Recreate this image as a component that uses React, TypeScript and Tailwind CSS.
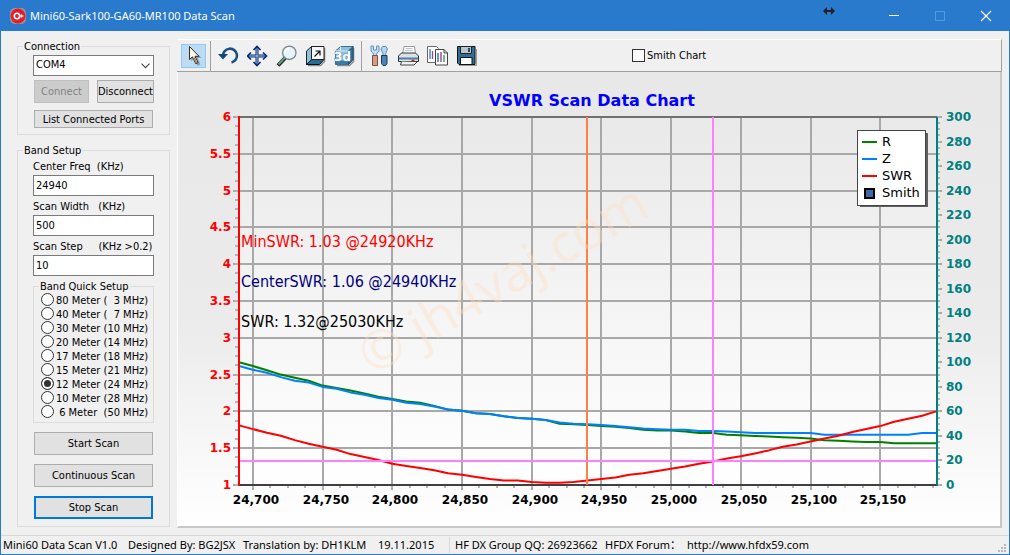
import type { ReactNode } from "react";

const uiFont = "font-['DejaVu_Sans_Condensed','Noto_Sans',sans-serif]";
const segoeFont = "font-['Noto_Sans','Noto_Sans_CJK_SC',sans-serif]";

const bands = [
  "80 Meter (  3 MHz)",
  "40 Meter (  7 MHz)",
  "30 Meter (10 MHz)",
  "20 Meter (14 MHz)",
  "17 Meter (18 MHz)",
  "15 Meter (21 MHz)",
  "12 Meter (24 MHz)",
  "10 Meter (28 MHz)",
  " 6 Meter  (50 MHz)",
];

// one sample every 10 KHz, 24690..25190
const START = 24690;
const STEP = 10;

const swr = [
  1.81, 1.76, 1.71, 1.67, 1.61, 1.56, 1.52, 1.48, 1.42, 1.38, 1.34, 1.29, 1.26, 1.23, 1.2, 1.16, 1.14,
  1.11, 1.08, 1.06, 1.06, 1.04, 1.03, 1.03, 1.04, 1.06, 1.08, 1.1, 1.14, 1.16, 1.19, 1.22, 1.25, 1.29,
  1.32, 1.36, 1.39, 1.43, 1.47, 1.52, 1.55, 1.59, 1.63, 1.67, 1.72, 1.76, 1.8, 1.86, 1.9, 1.94, 2,
];

const impedance = [
  97, 94, 91.5, 88, 85, 83.5, 80, 78.5, 75.5, 73.5, 71, 69.5, 67, 66, 64, 61.5, 60.5, 58.5, 58, 56, 54.5,
  54, 53, 51, 50, 49.5, 49, 48, 47, 46, 45.5, 45, 45, 44, 44, 43.5, 43, 42.5, 42.5, 42.5, 42.5, 42.5, 41,
  41, 41, 41, 41, 41, 41, 42.5, 42.5,
];

const resistance = [
  100, 97, 93.5, 90, 87.5, 85, 81, 79, 77, 74.5, 72, 70, 68, 67, 64.5, 61.5, 60.5, 58.5, 58, 56, 54.5, 54,
  53, 50, 49.5, 49, 48, 47.5, 46.5, 45, 44.5, 44.5, 43.5, 42.5, 42.5, 41, 40.5, 40, 39.5, 39, 38.5, 38,
  36.5, 36, 35.5, 35, 35, 34, 34, 34, 34,
];

const plot = { left: 61, right: 759, top: 45, bottom: 413 };

const xOf = (freq: number) => plot.left + (freq - START) * 1.394;
const ySwr = (value: number) => plot.bottom - ((value - 1) / 5) * (plot.bottom - plot.top);
const yOhm = (value: number) => plot.bottom - (value / 300) * (plot.bottom - plot.top);

function toPoints(values: number[], y: (value: number) => number) {
  return values.map((value, i) => `${xOf(START + i * STEP).toFixed(1)},${y(value).toFixed(1)}`).join(" ");
}

const range = (from: number, to: number, step: number) =>
  Array.from({ length: Math.round((to - from) / step) + 1 }, (_, i) => from + i * step);

function GroupBox({
  title,
  className = "",
  legendClass = "",
  children,
}: {
  title: string;
  className?: string;
  legendClass?: string;
  children: ReactNode;
}) {
  return (
    <fieldset className={`min-w-0 border border-[#dcdcdc] ${className}`}>
      <legend className={`h-3.5 px-px leading-4 ${legendClass}`}>{title}</legend>
      {children}
    </fieldset>
  );
}

function Field({ id, label, value }: { id: string; label: string; value: string }) {
  return (
    <div className="flex flex-col">
      <label htmlFor={id} className="whitespace-pre leading-4">
        {label}
      </label>
      <input id={id} defaultValue={value} className="h-[21px] w-full border border-[#7a7a7a] bg-white px-0.5" />
    </div>
  );
}

function PushButton({ children, className = "" }: { children: ReactNode; className?: string }) {
  return (
    <button type="button" className={`flex items-center justify-center whitespace-nowrap bg-[#e1e1e1] pt-0.5 ${className}`}>
      {children}
    </button>
  );
}

function ToolButton({ label, active, children }: { label: string; active?: boolean; children: ReactNode }) {
  return (
    <button
      type="button"
      aria-label={label}
      className={`flex h-6 w-[25px] shrink-0 items-center justify-center border ${
        active ? "border-[#90c8f6] bg-[#bcdcf4]" : "border-transparent"
      }`}
    >
      <svg viewBox="0 0 22 22" className="h-[22px] w-[22px] shrink-0" fill="none">
        {children}
      </svg>
    </button>
  );
}

function Separator() {
  return <div className="mr-px h-[30px] w-px shrink-0 bg-[#a0a0a0]" />;
}

function TitleBar() {
  return (
    <header className="relative flex h-[31px] items-center bg-[#2979cc] text-white">
      <svg viewBox="0 0 16 16" className="ml-[9px] h-4 w-4 shrink-0">
        <rect width="16" height="16" rx="5" fill="#a98f94" />
        <circle cx="8" cy="8" r="7.4" fill="#dc1f2b" />
        <circle cx="7" cy="8" r="2.7" fill="none" stroke="#fff" strokeWidth="1.6" />
        <path d="M9.5 8h4M11.7 6.6v2.8" stroke="#fff" strokeWidth="1.2" />
      </svg>
      <h1 className={`ml-1 flex-1 text-[11px] leading-4 whitespace-nowrap ${segoeFont}`}>
        Mini60-Sark100-GA60-MR100 Data Scan
      </h1>
      <svg viewBox="0 0 12 8" className="absolute top-[7px] right-[174px] h-2 w-3">
        <path d="M0 4l4-4v3h4V0l4 4-4 4V5H4v3z" fill="#222" />
      </svg>
      <button type="button" aria-label="Minimize" className="flex h-full w-[46px] items-center justify-center">
        <svg viewBox="0 0 12 12" className="h-3 w-3">
          <path d="M1 5.5h10" stroke="#fff" />
        </svg>
      </button>
      <button type="button" aria-label="Maximize" disabled className="flex h-full w-[46px] items-center justify-center">
        <svg viewBox="0 0 12 12" className="h-3 w-3">
          <path d="M1.5 1.5h9v9h-9z" fill="none" stroke="#5499de" />
        </svg>
      </button>
      <button type="button" aria-label="Close" className="flex h-full w-[46px] items-center justify-center">
        <svg viewBox="0 0 12 12" className="h-3 w-3">
          <path d="M1 1l10 10M11 1L1 11" stroke="#fff" strokeWidth="1.2" />
        </svg>
      </button>
    </header>
  );
}

function Sidebar() {
  return (
    <aside className="flex w-[169px] shrink-0 flex-col gap-2 py-2 pl-4">
      <GroupBox title="Connection" className="px-[15px] pb-1.5" legendClass="-ml-2.5">
        <div className="relative mt-0.5">
          <select
            aria-label="Port"
            defaultValue="COM4"
            className="block h-[21px] w-full appearance-none border border-[#7a7a7a] bg-white px-0.5"
          >
            <option>COM4</option>
          </select>
          <svg viewBox="0 0 9 6" className="pointer-events-none absolute top-2 right-1 h-1.5 w-[9px]">
            <path d="M.5.7l4 4 4-4" fill="none" stroke="#444" strokeWidth="1.1" />
          </svg>
        </div>
        <div className="mt-1 flex justify-between">
          <button
            type="button"
            disabled
            className="ml-px h-[23px] w-[55px] border border-[#bfbfbf] bg-[#cccccc] pt-0.5 text-[#838383]"
          >
            Connect
          </button>
          <PushButton className="h-[23px] w-[57px] border border-[#adadad]">Disconnect</PushButton>
        </div>
        <PushButton className="mt-[7px] ml-px h-[18px] w-[119px] border border-[#adadad]">
          List Connected Ports
        </PushButton>
      </GroupBox>

      <GroupBox title="Band Setup" className="px-[15px] pb-[7px]" legendClass="-ml-2.5">
        <div className="flex flex-col gap-[3px] pt-0.5">
          <Field id="center" label="Center Freq  (KHz)" value="24940" />
          <Field id="width" label="Scan Width   (KHz)" value="500" />
          <Field id="step" label="Scan Step     (KHz >0.2)" value="10" />
          <GroupBox title="Band Quick Setup" className="pb-[3px] pl-px" legendClass="ml-1">
            {bands.map((band, i) => (
              <label key={band} className="ml-1.5 flex h-3.5 items-start gap-0.5 leading-4 whitespace-pre">
                <input
                  type="radio"
                  name="band"
                  defaultChecked={i === 6}
                  className="h-[13px] w-[13px] shrink-0 appearance-none rounded-full border border-[#333] bg-white checked:bg-[#333] checked:shadow-[inset_0_0_0_2px_#fff]"
                />
                {band}
              </label>
            ))}
          </GroupBox>
        </div>
        <div className="mt-[9px] ml-px flex w-[119px] flex-col gap-[9px]">
          <PushButton className="h-[23px] border border-[#adadad]">Start Scan</PushButton>
          <PushButton className="h-[23px] border border-[#adadad]">Continuous Scan</PushButton>
          <PushButton className="h-[23px] border-2 border-[#0078d7]">Stop Scan</PushButton>
        </div>
      </GroupBox>
    </aside>
  );
}

function Toolbar() {
  return (
    <div className="flex h-[33px] items-center gap-1 border-t border-r border-b border-t-white border-r-[#a0a0a0] border-b-[#a0a0a0] pl-1">
      <ToolButton label="Select" active>
        <path d="M8 3v13l3-2 3.500 7 3-1.500-3-6.500h4z" fill="#222" opacity=".3" />
        <path d="M6.500 1.500v13l3-2.700 3.300 7 2.400-1.200-3.200-6.300h4z" fill="#fffbe8" stroke="#3a2a20" />
        <path d="M11 12.500l2.600 5.300" stroke="#a3876f" strokeWidth="1.5" />
      </ToolButton>
      <Separator />
      <ToolButton label="Reset">
        <path d="M5 11a7 7 0 1 1 8.500 6.500" stroke="#1a5080" strokeWidth="2.600" />
        <path d="M0 9h10l-5 5.500z" fill="#12477e" />
      </ToolButton>
      <ToolButton label="Pan">
        <path d="M10 2v18M1 11h18" stroke="#0c2f73" strokeWidth="3" />
        <path d="M10 3v16M2 11h16" stroke="#a9c8ea" />
        <path
          d="M6.500 5L10 1.500 13.500 5M6.500 17l3.500 3.500 3.500-3.500M4 7.500L.500 11 4 14.500M16 7.500l3.500 3.500-3.500 3.500"
          stroke="#0c2f73"
          strokeWidth="1.700"
        />
      </ToolButton>
      <ToolButton label="Zoom">
        <path d="M2 20.500l8-8.500" stroke="#222" strokeWidth="4" />
        <path d="M2.500 19.500l7-7.500" stroke="#5ba27f" strokeWidth="2" />
        <circle cx="13.300" cy="7.800" r="6.700" fill="#e5f3fb" stroke="#7d878e" strokeWidth="1.300" />
        <path d="M9 7.500a4.200 4.200 0 0 1 4-3.700" stroke="#fff" strokeWidth="2" />
      </ToolButton>
      <ToolButton label="Depth">
        <path d="M3 20.500h12.500l4-4V3" stroke="#8d8d8d" strokeWidth="1.600" />
        <path d="M1.500 6l5-4.500v13l-5 5z" fill="#8cc0dc" stroke="#222" />
        <path d="M1.500 19.500l5-5h12.500l-4.500 5z" fill="#246b98" stroke="#111" />
        <path d="M6.500 1.500h12.500v13H6.500z" fill="#f4f8fb" stroke="#222" />
        <path d="M9.500 11.500l5-5M10.500 6h4.500v4.500" stroke="#111" strokeWidth="1.200" />
      </ToolButton>
      <ToolButton label="3D">
        <path d="M3 20.500h12.500l4-4V3" stroke="#8d8d8d" strokeWidth="1.600" />
        <path d="M1.500 6l5-4.500h12.500v13l-4.500 5h-13z" fill="#8fbfdd" stroke="#3c6f92" />
        <path d="M14.500 6l4.500-4.500v13l-4.500 5z" fill="#2f6f9b" stroke="#20506f" />
        <path d="M1.500 6h13M6.500 1.500V6" stroke="#d9edf8" />
        <path d="M2 15.500h12v3.500H2z" fill="#3a7aa5" />
        <text
          x="0"
          y="16"
          className="font-['DejaVu_Sans',sans-serif] text-[12px] font-bold"
          fill="#fff"
          stroke="#5d95ba"
          strokeWidth="1"
          paintOrder="stroke"
        >
          3d
        </text>
      </ToolButton>
      <Separator />
      <ToolButton label="Options">
        <path d="M2 1v5l2.500 3v2h3V9L10 6V1L7.500 1v4h-3V1z" fill="#c2def5" stroke="#5f94c0" />
        <path d="M3.500 10.500h5v10h-5z" fill="#d99a86" stroke="#7c4f43" />
        <path d="M12 4l1.500-2.500h3.500L18.500 4l-2 5v2h-2.500V9z" fill="#b5d5ef" stroke="#5f94c0" />
        <path d="M12.500 10.500h5.500v8l-1.500 2h-2.500l-1.500-2z" fill="#4c84b4" stroke="#173958" />
      </ToolButton>
      <ToolButton label="Print">
        <path d="M4.500 9L6 1.500h10.500l1 7.500z" fill="#fff" stroke="#999" />
        <path d="M7.500 3.500h7M7 5.500h8" stroke="#b6c9d6" />
        <path d="M.500 11l3-3h14l3 3v5.500H.500z" fill="#dbe2e7" stroke="#333" />
        <path d="M1 13.500h19" stroke="#4580a6" strokeWidth="2" />
        <path d="M13.500 15.500h3" stroke="#e32020" strokeWidth="1.600" />
        <path d="M3.500 16.500L2.500 20h13.500l3-3" fill="#eef1f3" stroke="#444" />
      </ToolButton>
      <ToolButton label="Copy">
        <path d="M.500 1.500h9l2 2v14H.500z" fill="#fff" stroke="#666" />
        <path d="M3 4v10" stroke="#3979ae" strokeWidth="1.300" />
        <path d="M5.500 6v8" stroke="#8a4b8e" strokeWidth="1.300" />
        <path d="M8.500 4.500h8.500l3.500 3.500v12h-12z" fill="#fff" stroke="#444" />
        <path d="M17 4.500V8h3.500" stroke="#444" />
        <path d="M11 8v9" stroke="#3979ae" strokeWidth="1.500" />
        <path d="M14 7v10" stroke="#96518f" strokeWidth="1.500" />
        <path d="M17 10v7" stroke="#4a9b6a" strokeWidth="1.500" />
      </ToolButton>
      <ToolButton label="Save">
        <path d="M3 20.500h17.500V4" stroke="#999" />
        <path d="M1.500 1.500H19v18H3L1.500 18z" fill="#2e6f99" stroke="#111" />
        <path d="M4.500 1.500h11v7h-11z" fill="#b8c6ce" stroke="#222" />
        <path d="M12 3h2v4h-2z" fill="#1f4a6b" />
        <path d="M4.500 12.500h11.500v7H4.500z" fill="#fff" stroke="#111" />
      </ToolButton>
      <label className="ml-[149px] flex items-center gap-0.5 whitespace-nowrap">
        <input
          type="checkbox"
          className="h-[13px] w-[13px] appearance-none border border-[#333] bg-white checked:bg-[#333]"
        />
        <span className="pt-0.5">Smith Chart</span>
      </label>
    </div>
  );
}

function Legend() {
  const rows = [
    { name: "R", color: "#008000" },
    { name: "Z", color: "#0080ff" },
    { name: "SWR", color: "#ff0000" },
  ];

  return (
    <g className="font-['DejaVu_Sans',sans-serif] text-[13px]">
      <rect x="682" y="61" width="68" height="74" fill="#606060" />
      <rect x="679.5" y="58.5" width="68" height="75" fill="#fff" stroke="#444" />
      {rows.map((row, i) => (
        <g key={row.name}>
          <path d={`M684 ${70 + i * 17}h15`} stroke={row.color} strokeWidth="2" />
          <text x="704" y={74 + i * 17}>
            {row.name}
          </text>
        </g>
      ))}
      <rect x="687" y="117" width="9" height="9" fill="#4166aa" stroke="#000" strokeWidth="2" />
      <text x="704" y="125">
        Smith
      </text>
    </g>
  );
}

function ScanChart() {
  return (
    <svg viewBox="0 0 822 454" className="block h-auto w-full" role="img" aria-label="VSWR Scan Data Chart">
      <defs>
        <linearGradient id="panel" x1="0" y1="0" x2="0" y2="1">
          <stop offset="0" stopColor="#e8e8e8" />
          <stop offset=".55" stopColor="#ebebeb" />
          <stop offset="1" stopColor="#ffffff" />
        </linearGradient>
        <linearGradient id="wall" x1="0" y1="0" x2="0" y2="1">
          <stop offset="0" stopColor="#e9e9e9" />
          <stop offset="1" stopColor="#ffffff" />
        </linearGradient>
      </defs>
      <rect width="822" height="454" fill="url(#panel)" />
      <rect x={plot.left} y={plot.top} width={plot.right - plot.left} height={plot.bottom - plot.top} fill="url(#wall)" />

      <text
        x="414"
        y="34"
        textAnchor="middle"
        fill="#0000ff"
        className="font-['DejaVu_Sans',sans-serif] text-[16px] font-bold"
      >
        VSWR Scan Data Chart
      </text>

      {/* grid */}
      <g stroke="#a8a8a8" strokeWidth="2">
        {range(24700, 25150, 50).map((f) => (
          <path key={f} d={`M${Math.round(xOf(f))} ${plot.top}V${plot.bottom + 5}`} />
        ))}
        {range(1, 6, 0.5).map((v) => (
          <path key={v} d={`M${plot.left - 6} ${Math.round(ySwr(v))}H${v === 1 || v === 6 ? plot.left : plot.right}`} />
        ))}
        {range(0, 300, 20).map((v) => (
          <path key={v} d={`M${plot.right} ${Math.round(yOhm(v))}h5`} />
        ))}
      </g>

      {/* minor ticks */}
      <g stroke="#b4b4b4" strokeWidth="2">
        {range(1, 6, 0.125).map((v) => (
          <path key={v} d={`M${plot.left - 4} ${Math.round(ySwr(v))}h4`} />
        ))}
        {range(0, 300, 5).map((v) => (
          <path key={v} d={`M${plot.right} ${Math.round(yOhm(v))}h3`} />
        ))}
        {range(24700, 25187.5, 12.5).map((f) => (
          <path key={f} d={`M${Math.round(xOf(f))} ${plot.bottom}v3`} />
        ))}
      </g>

      <path d={`M${plot.left} ${plot.top}H${plot.right}`} stroke="#707070" strokeWidth="2" />
      <path d={`M${plot.left} ${plot.bottom}H${plot.right}`} stroke="#404040" strokeWidth="2" />

      <g fill="none" strokeWidth="2" strokeLinejoin="round">
        <polyline points={toPoints(resistance, yOhm)} stroke="#008000" />
        <polyline points={toPoints(impedance, yOhm)} stroke="#0080ff" />
        <polyline points={toPoints(swr, ySwr)} stroke="#ff0000" />
      </g>

      <path d={`M61 ${plot.top - 1}V${plot.bottom + 1}`} stroke="#ff0000" strokeWidth="2" />
      <path d={`M${plot.right} ${plot.top}V${plot.bottom + 1}`} stroke="#008080" strokeWidth="2" />

      {/* center and cursor markers */}
      <path d={`M409 ${plot.top}V${plot.bottom}`} stroke="#ff8040" strokeWidth="2" />
      <path d={`M535 ${plot.top}V${plot.bottom}M${plot.left + 1} 389H${plot.right - 1}`} stroke="#ff80ff" strokeWidth="2" />

      <g className="font-['DejaVu_Sans',sans-serif] text-[12px] font-bold">
        {range(1, 6, 0.5).map((v) => (
          <text key={v} x="53" y={Math.round(ySwr(v)) + 4} textAnchor="end" fill="#ff0000">
            {v}
          </text>
        ))}
        {range(0, 300, 20).map((v) => (
          <text key={v} x="768" y={Math.round(yOhm(v)) + 4} fill="#008080">
            {v}
          </text>
        ))}
        {range(24700, 25150, 50).map((f) => (
          <text key={f} x={Math.round(xOf(f)) + 3} y="432" textAnchor="middle">
            {f.toLocaleString("en-US")}
          </text>
        ))}
      </g>

      <g className="font-['DejaVu_Sans_Condensed','Noto_Sans',sans-serif] text-[16px]">
        <text x="63" y="175" fill="#ff0000">
          MinSWR: 1.03 @24920KHz
        </text>
        <text x="63" y="215" fill="#000080">
          CenterSWR: 1.06 @24940KHz
        </text>
        <text x="63" y="255">SWR: 1.32@25030KHz</text>
      </g>

      <text
        transform="translate(194 304) rotate(-30)"
        fill="#ffdfc0"
        opacity=".38"
        className="font-['Open_Sans',sans-serif] text-[53px]"
      >
        © jh4vaj.com
      </text>

      <Legend />
    </svg>
  );
}

function StatusBar() {
  return (
    <footer
      className={`flex h-[19px] items-center border-t border-[#d7d7d7] text-[11px] leading-4 whitespace-pre ${segoeFont}`}
    >
      <div className="flex w-[449px] shrink-0 border-r border-[#d7d7d7] pl-0.5">
        <span className="w-[125px]">Mini60 Data Scan V1.0</span>
        <span className="w-[115px]">Designed By: BG2JSX</span>
        <span className="w-[135px]">Translation by: DH1KLM</span>
        <span>19.11.2015</span>
      </div>
      <div className="flex min-w-0 flex-1 pl-[5px]">
        <span className="w-[150px]">HF DX Group QQ: 26923662</span>
        <span className="w-[82px]">HFDX Forum：</span>
        <span>http://www.hfdx59.com</span>
      </div>
      <svg viewBox="0 0 10 10" className="mr-0.5 h-2.5 w-2.5 self-end" fill="#b8b8b8">
        <path d="M7 0h2v2H7zM7 3h2v2H7zM4 3h2v2H4zM7 6h2v2H7zM4 6h2v2H4zM1 6h2v2H1z" />
      </svg>
    </footer>
  );
}

export default function App() {
  return (
    <div className={`flex min-h-screen flex-col border border-t-0 border-[#2979cc] bg-[#f0f0f0] text-[11px] text-black ${uiFont}`}>
      <TitleBar />
      <div className="flex flex-1 gap-[7px]">
        <Sidebar />
        <main className="mt-2 mr-[7px] min-w-0 flex-1">
          <Toolbar />
          <div className="border-r-2 border-b-2 border-l border-r-[#c8c8c8] border-b-[#c8c8c8] border-l-white">
            <ScanChart />
          </div>
        </main>
      </div>
      <StatusBar />
    </div>
  );
}
